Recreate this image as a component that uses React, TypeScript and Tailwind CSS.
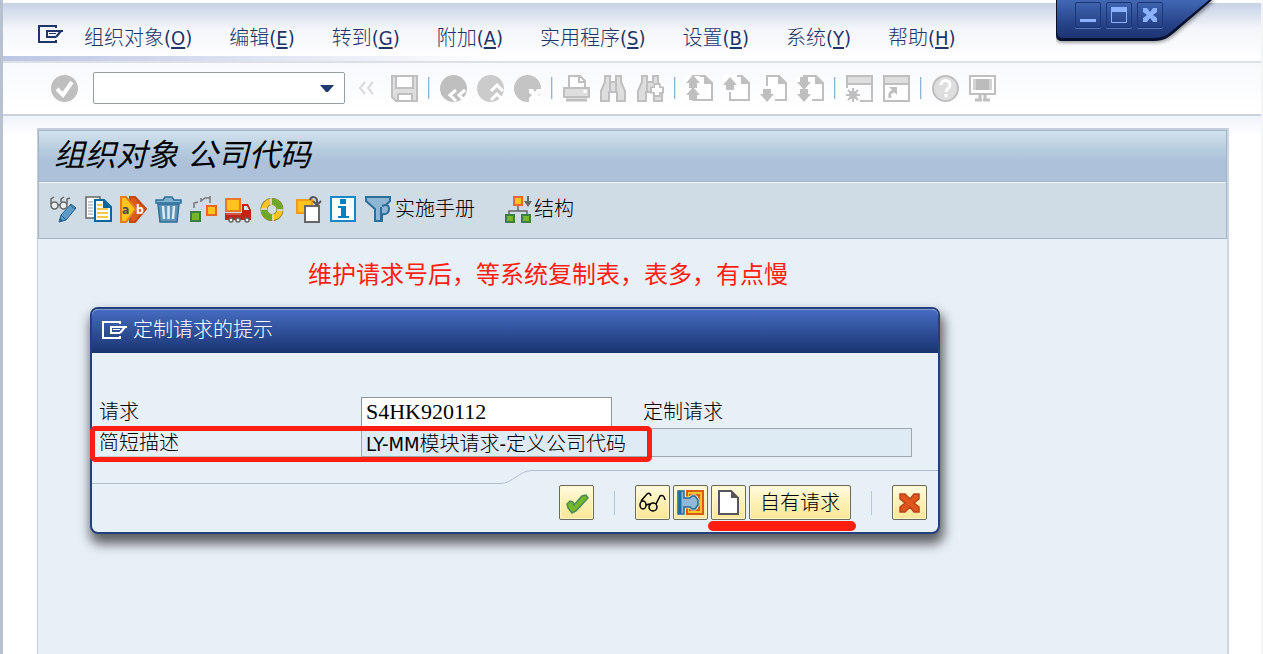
import type { ReactNode } from 'react'

const menus = [
  { label: '组织对象', hotkey: 'O' },
  { label: '编辑', hotkey: 'E' },
  { label: '转到', hotkey: 'G' },
  { label: '附加', hotkey: 'A' },
  { label: '实用程序', hotkey: 'S' },
  { label: '设置', hotkey: 'B' },
  { label: '系统', hotkey: 'Y' },
  { label: '帮助', hotkey: 'H' },
]

function Icon({ children }: { children: ReactNode }) {
  return (
    <svg viewBox="0 0 27 27" width="27" height="27" fill="none" className="block shrink-0">
      {children}
    </svg>
  )
}

function MenuGlyph({ className }: { className: string }) {
  return (
    <svg viewBox="0 0 25 18" width="25" height="18" fill="none" stroke="currentColor" strokeWidth="2" className={className}>
      <path d="M18 3V1H1v16h17v-2" />
      <path d="M25 6H9v6h9M23 6l-5 6" />
      <path d="M11 8.500h7" strokeWidth="1" />
    </svg>
  )
}

const G = '#bfbfbf'
const L = '#dedede'

function PageShape() {
  return (
    <>
      <path d="M7 1h12l7 7v17H7z" fill="#fff" stroke={G} strokeWidth="2" />
      <path d="M18 1v8h8z" fill={G} />
    </>
  )
}

const up = 'M7 0l7 8h-3v5H3V8H0z'

// standard toolbar, null is a divider
const systemTools: ({ title: string; icon: ReactNode } | null)[] = [
  {
    title: '保存',
    icon: (
      <>
        <path d="M1 1h25v25H5l-4-4z" fill={L} stroke={G} strokeWidth="2" />
        <path d="M5 1h17v12H5zM7 26v-7h14v7z" fill="#fff" stroke={G} strokeWidth="2" />
      </>
    ),
  },
  null,
  {
    title: '返回',
    icon: (
      <>
        <circle cx="13.500" cy="13.500" r="13.500" fill={G} />
        <path d="M16 15l-6 5 6 6M25 15l-6 5 6 6" stroke="#fff" strokeWidth="3" />
      </>
    ),
  },
  {
    title: '退出',
    icon: (
      <>
        <circle cx="13.500" cy="13.500" r="13.500" fill="#cbcbcb" />
        <path d="M14 16l6-6 6 6M14 25l6-6 6 6" stroke="#fff" strokeWidth="3" />
      </>
    ),
  },
  {
    title: '取消',
    icon: (
      <>
        <circle cx="13.500" cy="13.500" r="13.500" fill="#c4c4c4" />
        <path d="M15 14h4l2 3 2-3h4v4l-3 2 3 3v4h-4l-2-3-2 3h-4v-4l3-3-3-2z" fill="#fff" />
      </>
    ),
  },
  null,
  {
    title: '打印',
    icon: (
      <>
        <path d="M6 13V1h11l5 5v7" fill="#fff" stroke={G} strokeWidth="2" />
        <path d="M16 1v6h6" stroke={G} strokeWidth="2" />
        <path d="M1 13h25v9H1z" fill={L} stroke={G} strokeWidth="2" />
        <path d="M22 15v3" stroke="#fff" strokeWidth="3" />
        <path d="M3 25h21" stroke={G} strokeWidth="3" />
      </>
    ),
  },
  {
    title: '查找',
    icon: (
      <path d="M5 1h5v6h6V1h5v6l4 9v10h-8v-9h-8v9H1V16l4-9zM10 8v8M16 8v8" fill={L} stroke={G} strokeWidth="2" />
    ),
  },
  {
    title: '继续查找',
    icon: (
      <>
        <path d="M5 1h5v6h6V1h5v6l4 9v10h-8v-9h-8v9H1V16l4-9zM10 8v8" fill={L} stroke={G} strokeWidth="2" />
        <path d="M20 8v14M13 15h14" stroke={G} strokeWidth="7" />
        <path d="M20 10v10M15 15h10" stroke="#fff" strokeWidth="4" />
      </>
    ),
  },
  null,
  {
    title: '第一页',
    icon: (
      <>
        <PageShape />
        <path d="M0 1h15v23H0z" fill="#fff" />
        <path d={up} fill={G} />
        <path d={up} transform="translate(0 12)" fill={G} />
        <path d="M14 1h3" stroke={G} strokeWidth="2" />
      </>
    ),
  },
  {
    title: '上一页',
    icon: (
      <>
        <PageShape />
        <path d="M0 0h14v17H0z" fill="#fff" />
        <path d={up} transform="translate(0 2)" fill={G} />
      </>
    ),
  },
  {
    title: '下一页',
    icon: (
      <>
        <PageShape />
        <path d="M0 11h15v16H0z" fill="#fff" />
        <path d={up} transform="translate(0 27) scale(1 -1)" fill={G} />
      </>
    ),
  },
  {
    title: '最后一页',
    icon: (
      <>
        <PageShape />
        <path d="M0 3h15v24H0z" fill="#fff" />
        <path d={up} transform="translate(0 15) scale(1 -1)" fill={G} />
        <path d={up} transform="translate(0 27) scale(1 -1)" fill={G} />
      </>
    ),
  },
  null,
  {
    title: '新建会话',
    icon: (
      <>
        <path d="M1 13V1h25v25H14" stroke={G} strokeWidth="2" />
        <path d="M2 2h23v6H2z" fill={L} />
        <path d="M1 9h25" stroke={G} strokeWidth="2" />
        <circle cx="7" cy="20" r="4" fill={G} />
        <path d="M7 13v14M0 20h14M2 15l10 10M12 15L2 25" stroke={G} strokeWidth="2" />
      </>
    ),
  },
  {
    title: '创建快捷方式',
    icon: (
      <>
        <path d="M1 1h25v25H1z" fill="#fff" stroke={G} strokeWidth="2" />
        <path d="M2 2h23v6H2z" fill={L} />
        <path d="M1 9h25" stroke={G} strokeWidth="2" />
        <path d="M7 23c-1-4 0-6 4-7" stroke={G} strokeWidth="3" />
        <path d="M6 12h8v8z" fill={G} />
      </>
    ),
  },
  null,
  {
    title: '帮助',
    icon: (
      <>
        <circle cx="13.500" cy="13.500" r="12.500" fill={L} stroke={G} strokeWidth="2" />
        <path d="M9 10c0-6 9-6 9 0 0 4-4 3-4 7M14 19v3" stroke="#fff" strokeWidth="3" />
      </>
    ),
  },
  {
    title: '定制本地布局',
    icon: (
      <>
        <path d="M1 1h25v18H1z" fill="#fff" stroke={G} strokeWidth="2" />
        <path d="M4 4h19v11H4z" fill="#bcbcbc" />
        <path d="M4 4h3v11H4zM20 4h3v11h-3z" fill="#d2d2d2" />
        <path d="M11 20v4M16 20v4M6 25h7M14 25h7" stroke={G} strokeWidth="3" />
      </>
    ),
  },
]

const appTools = [
  {
    title: '显示更改',
    icon: (
      <>
        <g stroke="#666" strokeWidth="1.500">
          <circle cx="4.500" cy="9.500" r="3.500" fill="#e8eef2" />
          <circle cx="13.500" cy="9.500" r="3.500" fill="#e8eef2" />
          <path d="M1 8V3l3-2M8 9h2M11 6V3l3-2M17 8V3l3-1" />
        </g>
        <path d="M9 26l2-7L21 8l5 4-10 12z" fill="#5b9bc6" stroke="#25618f" />
        <path d="M11 19l5 5M20 9l5 4" stroke="#25618f" />
        <path d="M9 26l1-4 3 3z" fill="#25618f" />
      </>
    ),
  },
  {
    title: '复制',
    icon: (
      <>
        <path d="M1 1h14v21H1z" fill="#fff" stroke="#666" strokeWidth="1.500" />
        <path d="M3 6h5M3 9h5M3 12h5M3 15h5M3 18h5" stroke="#999" />
        <path d="M10 4h9l7 7v14H10z" fill="#fff" stroke="#0d6699" strokeWidth="2" />
        <path d="M18 4v8h8z" fill="#0d6699" />
        <path d="M12 9h5M12 13h11M12 17h11M12 21h11" stroke="#f3c54a" strokeWidth="2" />
      </>
    ),
  },
  {
    title: '重命名',
    icon: (
      <>
        <path d="M10 1h5l11 12-11 13h-5z" fill="#db5a1b" stroke="#c04a14" strokeWidth="2" />
        <path d="M1 1h5l10 12L6 26H1z" fill="#fdc51c" stroke="#e57b1c" strokeWidth="2" />
        <text x="2" y="18" fontSize="12" fontWeight="700" fill="#4a4a4a">a</text>
        <text x="16" y="18" fontSize="12" fontWeight="700" fill="#fff">b</text>
      </>
    ),
  },
  {
    title: '删除',
    icon: (
      <>
        <path d="M1 7V4h7l2-3h7l2 3h7v3z" fill="#7eb0d0" stroke="#2e6f99" strokeWidth="1.500" />
        <path d="M3 8h21l-2 18H5z" fill="#5d93b7" stroke="#2e6f99" strokeWidth="1.500" />
        <path d="M8 10l1 13M13.500 10v13M19 10l-1 13" stroke="#dcebf4" strokeWidth="2.500" />
      </>
    ),
  },
  {
    title: '比较',
    icon: (
      <>
        <path d="M4 12V7l4-1M11 5l4-3h5v5M11 2v4M20 0v5" stroke="#777" strokeWidth="1.500" />
        <path d="M1 16h9v9H1z" fill="#77b52a" stroke="#3b7d42" strokeWidth="2" />
        <path d="M17 10h9v9h-9z" fill="#fdc51c" stroke="#e8682a" strokeWidth="2" />
      </>
    ),
  },
  {
    title: '传输',
    icon: (
      <>
        <path d="M1 3h14v12H1z" fill="#fdc51c" stroke="#e8782a" strokeWidth="2" />
        <path d="M0 17h17V8h6l3 6v10H0z" fill="#bb2718" />
        <path d="M19 10h3l2 4h-5z" fill="#d8e3ea" />
        <path d="M1 18h15" stroke="#e88a6a" />
        <circle cx="6" cy="24" r="2" fill="#fff" stroke="#666" strokeWidth="1.500" />
        <circle cx="13" cy="24" r="2" fill="#fff" stroke="#666" strokeWidth="1.500" />
        <circle cx="22" cy="24" r="2" fill="#fff" stroke="#666" strokeWidth="1.500" />
      </>
    ),
  },
  {
    title: '刷新',
    icon: (
      <>
        <circle cx="12" cy="13.500" r="8" stroke="#7d7a2d" strokeWidth="7" />
        <circle cx="12" cy="13.500" r="8" stroke="#fdc51c" strokeWidth="5.500" />
        <path d="M12 5.500a8 8 0 0 1 8 8M12 21.500a8 8 0 0 1-8-8" stroke="#69a927" strokeWidth="5.500" />
        <path d="M11 2v7M24 14h-7M13 25v-7M1 13h6" stroke="#cfdce6" strokeWidth="1.500" />
      </>
    ),
  },
  {
    title: '移动',
    icon: (
      <>
        <path d="M2 4h15v13H2z" fill="#fdc51c" stroke="#f09a1e" strokeWidth="2" />
        <path d="M10 10h14v16H10z" fill="#fff" stroke="#666" strokeWidth="2" />
        <path d="M15 4c1-4 7-4 7 1v2M18 5l4 4 4-4" stroke="#555" strokeWidth="2" />
      </>
    ),
  },
  {
    title: '信息',
    icon: (
      <>
        <path d="M1 1h24v24H1z" fill="#fff" stroke="#1688c6" strokeWidth="2" />
        <path d="M10 3h6v5h-6zM8 10h8v10h3v2H8v-2h3v-8H8z" fill="#087fc2" />
      </>
    ),
  },
]

// dialog buttons sit on a 35px face with a pale yellow gradient
const faceClass =
  'flex h-[35px] items-center justify-center rounded-[2px] border border-[#6b6a5c] bg-linear-to-b from-[#fffbe0] via-[#fdf0b4] to-[#f8e698] shadow-[inset_0_0_0_1px_#fff7c9]'

function FaceButton({ title, children }: { title: string; children: ReactNode }) {
  return (
    <button type="button" title={title} aria-label={title} className={`${faceClass} w-[35px]`}>
      {children}
    </button>
  )
}

// sliver of the window behind this one
function BackgroundEdge() {
  return (
    <svg viewBox="0 0 1 654" width="1" height="654" className="absolute top-0 -left-[3px]" shapeRendering="crispEdges">
      <path d="M0 0h1v654H0z" fill="#c6c8ca" />
      <path d="M0 130h1v2H0zM0 137h1v2H0zM0 187h1v2H0zM0 191h1v2H0zM0 302h1v2H0zM0 495h1v3H0zM0 526h1v3H0z" fill="#0b8a5f" />
      <path d="M0 144h1v2H0zM0 151h1v2H0zM0 170h1v2H0zM0 175h1v2H0z" fill="#333" />
    </svg>
  )
}

function WindowControls() {
  const box = 'flex h-[26px] w-[26px] items-center justify-center rounded-[2px] border border-[#1d3572] shadow-[0_1px_0_#5577bd]'
  return (
    <div className="absolute top-0 right-[38px] h-[50px] w-[167px]">
      <svg viewBox="0 0 167 50" className="absolute inset-0 h-full w-full" fill="none">
        <defs>
          <linearGradient id="ctl" x1="0" y1="0" x2="0" y2="1">
            <stop offset="0" stopColor="#4167b4" />
            <stop offset="0.7" stopColor="#243f84" />
            <stop offset="1" stopColor="#1c3472" />
          </linearGradient>
          <filter id="soft" x="-10%" y="-20%" width="120%" height="150%">
            <feGaussianBlur stdDeviation="2" />
          </filter>
        </defs>
        <path d="M0 0v36q0 6 6 6h92c10 0 16-4 22-9L159 0z" fill="#000" opacity="0.5" filter="url(#soft)" />
        <path d="M0 0v35q0 6 6 6h92c10 0 15-4 21-9L156 0z" fill="#07102e" />
        <path d="M1 0v32q0 6 6 6h91c9 0 14-3 19-8L153 0z" fill="url(#ctl)" />
      </svg>
      <div className="relative flex gap-[5px] pt-[2px] pl-[19px]">
        <button type="button" aria-label="最小化" className={box}>
          <svg viewBox="0 0 16 16" width="16" height="16"><path d="M0 12h16v3H0z" fill="#8cb2ff" /></svg>
        </button>
        <button type="button" aria-label="最大化" className={box}>
          <svg viewBox="0 0 16 16" width="16" height="16" fill="none">
            <path d="M.5.500h15v15H.500z" stroke="#8cb2ff" />
            <path d="M0 0h16v5H0z" fill="#8cb2ff" />
          </svg>
        </button>
        <button type="button" aria-label="关闭" className={box}>
          <svg viewBox="0 0 16 16" width="16" height="16"><path d="M1 1h4l3 4 3-4h4v4l-4 3 4 3v4h-4l-3-4-3 4H1v-4l4-3-4-3z" fill="#8cb2ff" /></svg>
        </button>
      </div>
    </div>
  )
}

function RequestDialog() {
  return (
    <section
      role="dialog"
      aria-label="定制请求的提示"
      className="relative mt-4 ml-[52px] w-[850px] rounded-lg border-2 border-[#253f7a] bg-[#e8f0f7] shadow-[2px_8px_12px_2px_rgba(0,0,0,0.6)]"
    >
      <header className="flex h-[44px] items-center gap-[6px] rounded-t-md border-t border-[#7d9bd8] bg-linear-to-b from-[#466bc0] via-[#2f5099] to-[#1a3470] pl-[10px] pb-1 text-white">
        <MenuGlyph className="block" />
        <h2 className="text-[20px] leading-6 font-light">定制请求的提示</h2>
      </header>

      <form className="pt-[44px] pl-[7px] text-[20px] leading-6 text-black" onSubmit={(e) => e.preventDefault()}>
        <div className="flex h-[31px] items-start">
          <label htmlFor="request" className="h-[30px] w-[262px] border-b border-[#c5ccd3] pt-[3px] font-light">请求</label>
          <input
            id="request"
            defaultValue="S4HK920112"
            className="h-[30px] w-[251px] border border-[#8c949c] bg-white px-1 font-['Liberation_Serif',serif] text-[22px] outline-none"
          />
          <span className="ml-[31px] pt-[3px] font-light">定制请求</span>
        </div>
        <div className="flex h-[30px] items-start">
          <label htmlFor="summary" className="h-[29px] w-[262px] border-b border-[#c5ccd3] pt-[3px] font-light">简短描述</label>
          <input
            id="summary"
            readOnly
            defaultValue="LY-MM模块请求-定义公司代码"
            className="h-[29px] w-[551px] border border-[#a0a8ae] bg-[#deeaf4] px-1 font-light outline-none"
          />
        </div>
      </form>

      <div className="mt-3 flex h-[14px] items-stretch">
        <div className="w-[408px] border-b border-[#b0bfd0]" />
        <svg viewBox="0 0 32 14" width="32" height="14" fill="none" className="block">
          <path d="M0 13.500C13 13.500 19 .500 32 .500" stroke="#b0bfd0" />
        </svg>
        <div className="flex-1 border-t border-[#b0bfd0]" />
      </div>

      <div className="flex items-center justify-end gap-[3px] pt-[1px] pr-[11px] pb-3">
        <FaceButton title="继续">
          <Icon>
            <path d="M4 15l3-3 3 1 1 3 8-9 4-1 2 3-12 13-4 2-4-5z" fill="#76b82a" stroke="#4a8a5a" strokeWidth="1.500" />
          </Icon>
        </FaceButton>
        <span className="mx-[17px] h-6 w-px bg-[#b1c7dc]" />
        <FaceButton title="显示">
          <svg viewBox="0 0 27 27" width="27" height="27" fill="none" stroke="#000" strokeWidth="1.500">
            <ellipse cx="4" cy="16" rx="3" ry="4" />
            <ellipse cx="14" cy="18" rx="4" ry="4" />
            <path d="M2 12L8 5q3-2 4 2M7 16l3-1 2 1M17 15l4-8q4-2 5 4" />
          </svg>
        </FaceButton>
        <FaceButton title="选择请求">
          <Icon>
            <path d="M10 2h16v23H10v-6h-4V9h4z" fill="#fbc52b" stroke="#d95b16" strokeWidth="2" />
            <path d="M12 6h10v15H12M16 10v8" stroke="#d95b16" strokeWidth="2" />
            <path d="M1 2h6v7h6l2-2h3l3 4v5l-3 4h-3l-2-2H7v7H1z" fill="#91b8d8" stroke="#eaf0dc" strokeWidth="3" />
            <path d="M1 2h6v7h6l2-2h3l3 4v5l-3 4h-3l-2-2H7v7H1z" fill="#91b8d8" stroke="#29688f" strokeWidth="1.500" />
            <path d="M3 2v23" stroke="#1770a3" strokeWidth="3" />
          </Icon>
        </FaceButton>
        <FaceButton title="创建请求">
          <Icon>
            <path d="M4 2h12l7 7v16H4z" fill="#fff" stroke="#55565a" strokeWidth="2" />
            <path d="M16 1v8h8z" fill="#55565a" />
          </Icon>
        </FaceButton>
        <button type="button" className={`${faceClass} w-[102px] text-[20px] font-light`}>自有请求</button>
        <span className="mx-[17px] h-6 w-px bg-[#b1c7dc]" />
        <FaceButton title="取消">
          <Icon>
            <path d="M4 5h5l5 5 4-5h5v5l-5 4 5 4v5h-5l-4-5-5 5H4v-5l5-4-5-4z" fill="#e0561a" stroke="#b8421c" strokeWidth="1.500" />
          </Icon>
        </FaceButton>
      </div>

      {/* red markup over the description row and the request buttons */}
      <div className="pointer-events-none absolute top-[117px] -left-[2px] h-[36px] w-[562px] rounded-[5px] border-[5px] border-[#ff1e10]" />
      <div className="pointer-events-none absolute right-[82px] bottom-[1px] h-[10px] w-[148px] rounded-full bg-[#ff1e10]" />
    </section>
  )
}

export default function App() {
  return (
    <div className="relative flex min-h-screen flex-col overflow-hidden border-r-2 border-l-[3px] border-r-[#f3f4f6] border-l-[#b7c1d0] bg-white font-['DejaVu_Sans_Condensed','Noto_Sans_CJK_SC',sans-serif]">
      <BackgroundEdge />
      <header className="border-b-2 border-[#dce0e7] pt-[3px]">
        <nav className="flex h-[58px] items-center bg-linear-to-b from-[#c6d2e6] via-[#f4f6fa] via-45% to-white pt-3 pl-[35px] text-[20px] leading-6 text-[#1f3468]">
          <MenuGlyph className="mb-2 block" />
          <ul className="ml-[21px] flex gap-[37px]">
            {menus.map(({ label, hotkey }) => (
              <li key={hotkey}>
                <button type="button" className="whitespace-nowrap">
                  <span className="font-light">{label}</span>(<span className="underline underline-offset-2">{hotkey}</span>)
                </button>
              </li>
            ))}
          </ul>
        </nav>
        <div className="-mt-[5px] h-[5px] bg-linear-to-r from-[#bcc6e3] via-[#e8ebf6] via-25% to-white to-40%" />
      </header>
      <WindowControls />

      <div className="flex h-[53px] shrink-0 items-center gap-[10px] border-b-2 border-[#cbd1df] bg-linear-to-b from-[#f7f9fc] to-white pb-[1px] pl-12">
        <button type="button" title="回车" aria-label="回车" className="mr-[5px]">
          <Icon>
            <circle cx="13.500" cy="13.500" r="13.500" fill="#bfbfbf" />
            <path d="M6 14l6 6L21 7" stroke="#fff" strokeWidth="4" />
          </Icon>
        </button>
        <div className="flex h-8 w-[252px] items-center rounded-[2px] border border-[#999ea6] bg-white">
          <input aria-label="命令字段" className="h-full min-w-0 flex-1 px-1 outline-none" />
          <button type="button" aria-label="展开命令" className="pr-[10px]">
            <svg viewBox="0 0 14 8" width="14" height="8"><path d="M0 1h14L8 8H6z" fill="#1f3a70" /></svg>
          </button>
        </div>
        <button type="button" aria-label="隐藏命令字段" className="w-[26px]">
          <svg viewBox="0 0 26 14" width="26" height="14" fill="none">
            <path d="M10 1L5 7l5 6M18 1l-5 6 5 6" stroke="#dadada" strokeWidth="2" />
          </svg>
        </button>
        {systemTools.map((tool, i) =>
          tool ? (
            <button key={tool.title} type="button" title={tool.title} aria-label={tool.title}>
              <Icon>{tool.icon}</Icon>
            </button>
          ) : (
            <span key={i} className="h-[22px] w-[2px] border-l border-[#8fb4d6] bg-[#d8e5f0]" />
          )
        )}
      </div>

      <main className="flex flex-1 flex-col bg-linear-to-b from-[#eff3fa] to-white to-[20px] pt-3 pr-8 pl-[34px]">
        <div className="flex flex-1 flex-col border-t-2 border-r-2 border-l border-t-[#c6cedb] border-r-[#cdd6e2] border-l-[#c6cedb] bg-[#e8f0f7]">
          <div className="border border-[#a3b6c9]">
            <h1 className="flex h-[51px] items-center border-b border-[#a3b6c9] bg-linear-to-b from-[#d3e2ee] via-[#b5cbdd] via-40% to-[#adc2da] to-60% pb-[2px] pl-[15px] text-[31px] leading-9 font-normal text-black italic">
              组织对象 公司代码
            </h1>
            <div className="flex h-[56px] items-center gap-2 border-t border-[#eef4f8] bg-[#cfdce6] pb-[3px] pl-[11px] text-[20px] leading-6 font-light text-black">
              {appTools.map(({ title, icon }) => (
                <button key={title} type="button" title={title} aria-label={title}>
                  <Icon>{icon}</Icon>
                </button>
              ))}
              <button type="button" className="flex items-center gap-[3px]">
                <Icon>
                  <path d="M1 1h24v4l-8 8v12h-7V13L1 5z" fill="#8fb5d5" stroke="#2e6f99" strokeWidth="2" />
                  <path d="M16 25V11M17 10q7-3 7 3t-7 5" stroke="#2e6f99" strokeWidth="2" fill="#8fb5d5" />
                </Icon>
                实施手册
              </button>
              <button type="button" className="ml-[22px] flex items-center gap-[2px]">
                <Icon>
                  <path d="M13 9v6M4 19v-4h18v4" stroke="#666" strokeWidth="1.500" />
                  <path d="M9 1h8v8H9z" fill="#fdc51c" stroke="#e8682a" strokeWidth="2" />
                  <path d="M1 19h8v7H1zM17 19h8v7h-8z" fill="#77b52a" stroke="#3b7d42" strokeWidth="2" />
                  <path d="M23 0v5" stroke="#666" strokeWidth="2" />
                  <path d="M19 5h8l-4 6z" fill="#666" />
                </Icon>
                结构
              </button>
            </div>
          </div>

          <div className="flex-1 pt-5 pb-12">
            <p className="ml-[270px] text-[24px] leading-8 text-[#ff1e10]">维护请求号后，等系统复制表，表多，有点慢</p>
            <RequestDialog />
          </div>
        </div>
      </main>
    </div>
  )
}
